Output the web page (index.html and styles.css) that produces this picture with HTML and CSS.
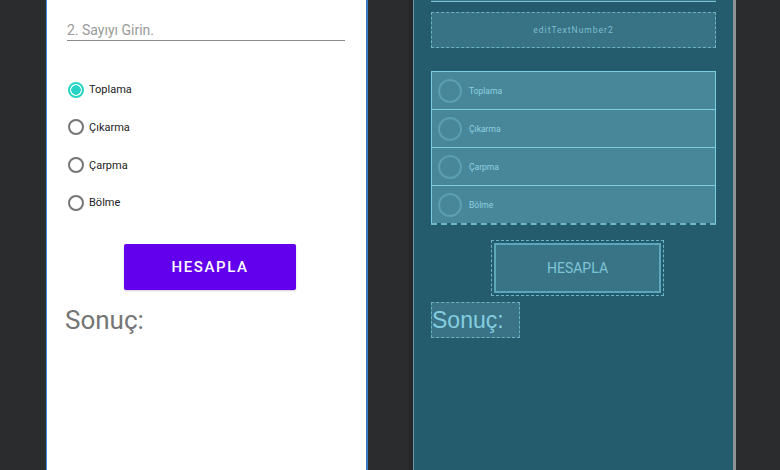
FILE: index.html
```html
<!DOCTYPE html>
<html lang="tr">
<head>
  <meta charset="UTF-8">
  <meta name="viewport" content="width=device-width, initial-scale=1.0">
  <title>Hesap Makinesi - Tasarım</title>
  <link rel="stylesheet" href="styles.css">
</head>
<body>
  <div class="editor">
    <!-- Design görünümü -->
    <div class="phone">
      <div class="edit-field">2. Sayıyı Girin.</div>

      <div class="radio-group">
        <label class="radio"><span class="dot checked"></span>Toplama</label>
        <label class="radio"><span class="dot"></span>Çıkarma</label>
        <label class="radio"><span class="dot"></span>Çarpma</label>
        <label class="radio"><span class="dot"></span>Bölme</label>
      </div>

      <button class="btn-hesapla">HESAPLA</button>

      <div class="result">Sonuç:</div>
    </div>

    <!-- Blueprint görünümü -->
    <div class="blueprint">
      <div class="bp-top"></div>
      <div class="bp-edit">editTextNumber2</div>

      <div class="bp-group">
        <div class="bp-row"><span class="bp-circle"></span>Toplama</div>
        <div class="bp-row"><span class="bp-circle"></span>Çıkarma</div>
        <div class="bp-row"><span class="bp-circle"></span>Çarpma</div>
        <div class="bp-row"><span class="bp-circle"></span>Bölme</div>
      </div>

      <div class="bp-button"><div class="bp-button-inner">HESAPLA</div></div>

      <div class="bp-result">Sonuç:</div>
    </div>
  </div>
</body>
</html>
```

FILE: styles.css
```css
body {
  margin: 0;
  padding: 0;
  background-color: #2b2c2e;
  font-family: Roboto, "Liberation Sans", sans-serif;
  overflow: hidden;
}
.editor {
  display: flex;
  height: 470px;
  padding-left: 46px;
}

/* design */
.phone {
  box-sizing: border-box;
  width: 322px;
  background: #fff;
  border-left: 1px solid #3f8fe6;
  border-right: 2px solid #3a7cc4;
  padding: 20px 21px 0 20px;
}
.edit-field {
  height: 20px;
  line-height: 20px;
  font-size: 14px;
  color: #9a9a9a;
  border-bottom: 1.5px solid #8c8c8c;
}
.radio-group {
  margin-top: 30px;
}
.radio {
  display: flex;
  align-items: center;
  height: 37.67px;
  font-size: 11px;
  color: #222;
}
.dot {
  width: 12px;
  height: 12px;
  border: 2px solid #757575;
  border-radius: 50%;
  margin: 0 5px 0 1px;
}
.dot.checked {
  border-color: #27d5c6;
  background: radial-gradient(circle, #27d5c6 0 4.5px, #fff 5px);
}
.btn-hesapla {
  display: block;
  margin: 22px 0 0 57px;
  width: 172px;
  height: 46px;
  background-color: #6200ee;
  color: #fff;
  border: none;
  border-radius: 2px;
  font-family: Roboto, sans-serif;
  font-size: 15px;
  font-weight: 500;
  letter-spacing: 1.6px;
  box-shadow: 0 1px 2px rgba(0, 0, 0, 0.2);
}
.result {
  margin-top: 15px;
  margin-left: -2px;
  font-size: 26px;
  line-height: 30px;
  color: #757575;
}

/* blueprint */
.blueprint {
  box-sizing: border-box;
  margin-left: 41px;
  width: 327px;
  background: #245c6e;
  border-left: 4px solid #252628;
  border-right: 3px solid #8e9498;
  padding: 0 17px 0 18px;
  box-shadow: inset 1px 0 0 #6d98a4;
}
.bp-top {
  width: 285px;
  height: 1px;
  background: #3a7384;
  border-bottom: 1px solid #78c3d6;
}
.bp-edit {
  width: 283px;
  height: 34px;
  margin-top: 10px;
  background: #387385;
  border: 1px dashed #6db3c6;
  color: #7dbfcf;
  font-size: 8.5px;
  letter-spacing: 1px;
  text-align: center;
  line-height: 34px;
}
.bp-group {
  width: 285px;
  margin-top: 23px;
  border-top: 1px solid #7ccde0;
  border-bottom: 2px dashed #6fb6c8;
}
.bp-row {
  display: flex;
  align-items: center;
  height: 37px;
  background: #488799;
  border-left: 1px solid #7ccde0;
  border-right: 1px solid #7ccde0;
  border-bottom: 1px solid #7ccde0;
  color: #8fd0e0;
  font-size: 8.5px;
}
.bp-row:last-child {
  border-bottom: none;
}
.bp-circle {
  width: 20px;
  height: 20px;
  border: 2px solid #5c9fb1;
  border-radius: 50%;
  margin: 0 7px 0 6px;
}
.bp-button {
  width: 167px;
  height: 50px;
  margin: 15px 0 0 60px;
  border: 1px dashed #6db3c6;
  padding: 2px;
}
.bp-button-inner {
  height: 46px;
  border: 2px solid #5ea6b9;
  background: #397486;
  color: #7fc5d7;
  font-size: 14px;
  text-align: center;
  line-height: 46px;
}
.bp-result {
  width: 87px;
  height: 34px;
  margin-top: 6px;
  background: #397385;
  border: 1px dashed #6db3c6;
  color: #86cde0;
  font-family: "Liberation Sans", sans-serif;
  font-size: 23px;
  line-height: 34px;
}
```
